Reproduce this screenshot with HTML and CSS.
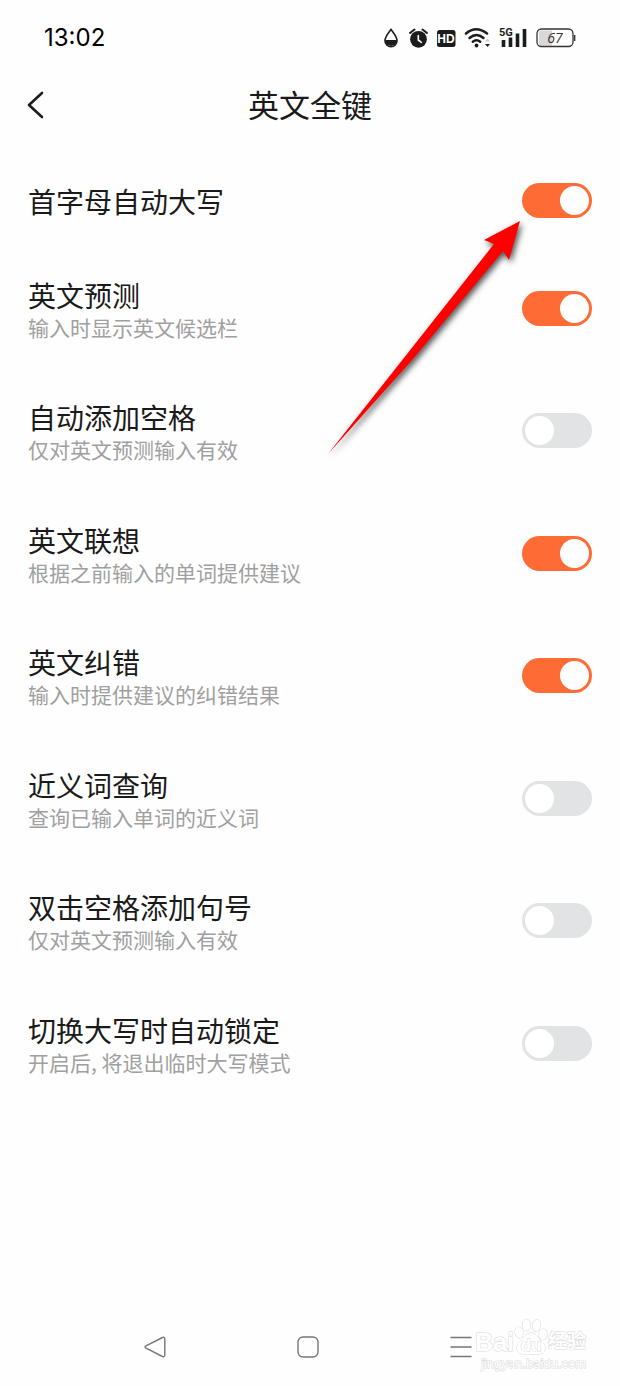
FILE: index.html
```html
<!DOCTYPE html>
<html lang="zh-CN">

<head>
    <meta charset="UTF-8">
    <meta name="viewport" content="width=device-width, initial-scale=1.0">
    <title>英文全键</title>
    <link rel="stylesheet" href="styles.css">
</head>

<body>
    <div class="page">
        <!-- 状态栏 -->
        <div class="status">
            <span class="time">13:02</span>
            <div class="icons">
                <svg width="16" height="22" viewBox="0 0 16 22">
                    <path d="M7 2.500C4.500 6 1 9.600 1 13.700a6 6 0 0 0 12 0C13 9.600 9.500 6 7 2.500z" fill="none" stroke="#1c1c1c" stroke-width="1.600"/>
                    <path d="M1 13h12a6 6 0 0 1-12 0z" fill="#1c1c1c"/>
                </svg>
                <svg width="20" height="22" viewBox="0 0 20 22">
                    <circle cx="10.500" cy="12.300" r="8.400" fill="#1c1c1c"/>
                    <path d="M2 6L6.500 2.500M19 6L14.500 2.500" stroke="#1c1c1c" stroke-width="2" stroke-linecap="round"/>
                    <path d="M10.300 8.500v4.500l3 2.300" fill="none" stroke="#fff" stroke-width="1.600" stroke-linecap="round"/>
                </svg>
                <svg width="20" height="22" viewBox="0 0 20 22">
                    <rect x="1" y="3" width="18.500" height="17" rx="2.500" fill="#1c1c1c"/>
                    <text x="10" y="16" class="hd">HD</text>
                </svg>
                <svg width="27" height="22" viewBox="0 0 27 22">
                    <g fill="none" stroke="#1c1c1c" stroke-width="2.500" stroke-linecap="round">
                        <path d="M2 6.500q10-8.500 21 0"/>
                        <path d="M5.500 11q7-6 14 0"/>
                        <path d="M8.800 14.800q3.700-3 7.400 0"/>
                    </g>
                    <circle cx="12.500" cy="18.500" r="1.900" fill="#1c1c1c"/>
                    <path d="M21 14.500l2.500-3 2.500 3z" fill="#ccc"/>
                    <path d="M21 17l2.500 3 2.500-3z" fill="#1c1c1c"/>
                </svg>
                <svg width="29" height="22" viewBox="0 0 29 22">
                    <path d="M4.500 13v7M11.500 10.500v9.500M18.500 6.500v13.500M25.500 2v18" stroke="#1c1c1c" stroke-width="3.600"/>
                    <text x="0" y="9" class="net">5G</text>
                </svg>
                <svg width="40" height="22" viewBox="0 0 40 22">
                    <path d="M5 3.500h11v15H5a2 2 0 0 1-2-2v-11a2 2 0 0 1 2-2z" fill="#d8d8d8"/>
                    <rect x="1" y="2" width="36" height="17.500" rx="4.500" fill="none" stroke="#333" stroke-width="1.300"/>
                    <path d="M38.600 8v6" stroke="#333" stroke-width="1.500"/>
                    <text x="19" y="15.500" class="level">67</text>
                </svg>
            </div>
        </div>

        <header class="header">
            <button type="button" class="back" aria-label="返回">
                <svg width="20" height="30" viewBox="0 0 20 30">
                    <path d="M16 3L3 15l13 12" fill="none" stroke="#1c1c1c" stroke-width="2.600" stroke-linecap="round" stroke-linejoin="round"/>
                </svg>
            </button>
            <h1 class="title">英文全键</h1>
        </header>

        <!-- 设置列表 -->
        <main class="list">
            <label class="row">
                <span class="text"><span class="name">首字母自动大写</span></span>
                <input type="checkbox" class="switch" checked>
            </label>
            <label class="row">
                <span class="text"><span class="name">英文预测</span><span class="desc">输入时显示英文候选栏</span></span>
                <input type="checkbox" class="switch" checked>
            </label>
            <label class="row">
                <span class="text"><span class="name">自动添加空格</span><span class="desc">仅对英文预测输入有效</span></span>
                <input type="checkbox" class="switch">
            </label>
            <label class="row">
                <span class="text"><span class="name">英文联想</span><span class="desc">根据之前输入的单词提供建议</span></span>
                <input type="checkbox" class="switch" checked>
            </label>
            <label class="row">
                <span class="text"><span class="name">英文纠错</span><span class="desc">输入时提供建议的纠错结果</span></span>
                <input type="checkbox" class="switch" checked>
            </label>
            <label class="row">
                <span class="text"><span class="name">近义词查询</span><span class="desc">查询已输入单词的近义词</span></span>
                <input type="checkbox" class="switch">
            </label>
            <label class="row">
                <span class="text"><span class="name">双击空格添加句号</span><span class="desc">仅对英文预测输入有效</span></span>
                <input type="checkbox" class="switch">
            </label>
            <label class="row">
                <span class="text"><span class="name">切换大写时自动锁定</span><span class="desc">开启后, 将退出临时大写模式</span></span>
                <input type="checkbox" class="switch">
            </label>
            <!-- 指向第一个开关的箭头 -->
            <svg class="arrow" width="192" height="233" viewBox="0 0 192 233">
                <path d="M0 233L166 23l-10-4L192 0l-11 39-6-9L85 138z" fill="#f00"/>
            </svg>
        </main>

        <!-- 底部导航 -->
        <nav class="nav">
            <button type="button" aria-label="返回">
                <svg width="24" height="24" viewBox="0 0 24 24">
                    <path d="M19.500 2.500L3 10.800q-2 1.200 0 2.400l16.500 8.300q2.300.8 2.300-1.500V4q0-2.300-2.300-1.500z" fill="none" stroke="#777" stroke-width="1.400"/>
                </svg>
            </button>
            <button type="button" aria-label="主页">
                <svg width="24" height="24" viewBox="0 0 24 24">
                    <rect x="2" y="2" width="20" height="20" rx="5" fill="none" stroke="#777" stroke-width="1.400"/>
                </svg>
            </button>
            <button type="button" aria-label="菜单">
                <svg width="24" height="24" viewBox="0 0 24 24">
                    <path d="M1.500 2.500h21M1.500 12h21M1.500 21.500h21" stroke="#777" stroke-width="1.600"/>
                </svg>
            </button>
        </nav>

        <div class="mark">
            <div class="brand">
                <span class="bai">Bai</span>
                <svg width="34" height="38" viewBox="0 0 34 38">
                    <g fill="#fff" stroke="#d8d8d8">
                        <ellipse cx="5" cy="14.500" rx="4" ry="5.500" transform="rotate(-12 5 14.500)"/>
                        <ellipse cx="12.500" cy="7" rx="4" ry="5.800"/>
                        <ellipse cx="22.500" cy="7.500" rx="4" ry="5.800" transform="rotate(10 22.500 7.500)"/>
                        <ellipse cx="29" cy="16.500" rx="4" ry="5.500" transform="rotate(14 29 16.500)"/>
                        <path d="M17 15c-5 0-6 4-9 7-3 2-5 4-5 8 0 4 3 6 7 6h14c4 0 7-2 7-6 0-4-3-6-5-8-3-3-4-7-9-7z"/>
                    </g>
                    <text x="17" y="33" class="du">du</text>
                </svg>
                <span class="jy">经验</span>
            </div>
            <div class="site">jingyan.baidu.com</div>
        </div>
    </div>
</body>

</html>
```
FILE: styles.css
```css
*{
    margin: 0;
    padding: 0;
    box-sizing: border-box;
}
body{
    background: #fefefe;
    color: #1a1a1a;
    font-family: "Noto Sans", "Noto Sans CJK SC", sans-serif;
}
button{
    border: none;
    background: none;
}
svg{
    display: block;
}
.page{
    position: relative;
    display: flex;
    flex-direction: column;
    min-height: 100vh;
}
/* 状态栏 */
.status{
    display: flex;
    align-items: center;
    justify-content: space-between;
    height: 76px;
    padding: 0 44px;
}
.time{
    color: #000;
    font-family: Inter, sans-serif;
    font-size: 24px;
    line-height: 28px;
}
.icons{
    display: flex;
    align-items: center;
    gap: 8px;
}
.hd{
    fill: #fff;
    font: bold 12px "Liberation Sans", sans-serif;
    text-anchor: middle;
}
.net{
    fill: #1c1c1c;
    stroke: #fefefe;
    stroke-width: 2px;
    paint-order: stroke;
    font: bold 11px Roboto, sans-serif;
}
.level{
    fill: #333;
    font: italic 14px "Open Sans", sans-serif;
    text-anchor: middle;
}
/* 标题 */
.header{
    display: grid;
    grid-template-columns: 40px 1fr 40px;
    align-items: center;
    height: 58px;
    padding: 0 26px;
}
.title{
    padding-bottom: 2px;
    font-family: "Noto Sans CJK SC", sans-serif;
    font-size: 31px;
    font-weight: 400;
    line-height: 40px;
    text-align: center;
}
/* 列表 */
.list{
    position: relative;
    flex: 1;
    padding: 19px 28px;
    font-family: "Noto Sans CJK SC", sans-serif;
}
.row{
    display: flex;
    align-items: center;
    justify-content: space-between;
    min-height: 122px;
}
.row:nth-child(odd){
    min-height: 123px;
}
.row:first-child{
    min-height: 94px;
}
.text{
    display: flex;
    flex-direction: column;
    padding-top: 1px;
}
.name{
    font-size: 28px;
    line-height: 36px;
}
.desc{
    color: #a0a0a0;
    font-size: 21px;
    line-height: 28px;
}
.switch{
    appearance: none;
    flex: none;
    width: 70px;
    height: 35px;
    padding: 3px;
    border-radius: 18px;
    background: #e2e3e5;
}
.switch::before{
    content: "";
    display: block;
    width: 29px;
    height: 29px;
    border-radius: 50%;
    background: #fff;
}
.switch:checked{
    background: #ff6b35;
}
.switch:checked::before{
    margin-left: auto;
}
.arrow{
    position: absolute;
    top: 87px;
    right: 100px;
    overflow: visible;
    filter: drop-shadow(2px 3px 3px rgba(0, 0, 0, .7));
    pointer-events: none;
}
/* 底部导航 */
.nav{
    display: flex;
    height: 78px;
    padding: 0 82px 0 78px;
}
.nav button{
    display: flex;
    flex: 1;
    align-items: center;
    justify-content: center;
}
/* 水印 */
.mark{
    position: absolute;
    right: 34px;
    bottom: 14px;
    color: #fff;
    font-family: "Liberation Sans", "Noto Sans CJK SC", sans-serif;
    font-weight: bold;
    -webkit-text-stroke: 1px #d8d8d8;
    paint-order: stroke;
}
.brand{
    display: flex;
    align-items: flex-end;
    justify-content: flex-end;
    height: 38px;
}
.bai{
    font-size: 25px;
    line-height: 28px;
}
.jy{
    font-size: 19px;
    line-height: 28px;
}
.du{
    fill: #fff;
    stroke: #d8d8d8;
    font-size: 17px;
    text-anchor: middle;
}
.site{
    font-size: 13px;
    font-weight: 400;
    line-height: 16px;
    text-align: right;
}
```
